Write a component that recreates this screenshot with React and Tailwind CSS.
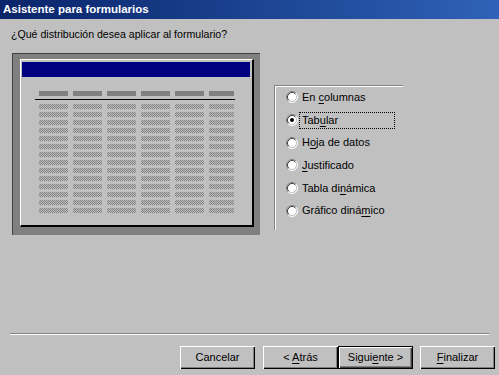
import React from "react";

const font = { fontFamily: '"Liberation Sans", Arial, sans-serif' };

function Radio({ checked }) {
  return (
    <svg width="12" height="12" viewBox="0 0 12 12" className="shrink-0">
      <circle cx="6" cy="6" r="5" fill="#ffffff" />
      <path d="M2.11 9.89 A5.5 5.5 0 0 1 9.89 2.11" fill="none" stroke="#808080" strokeWidth="1" />
      <path d="M9.89 2.11 A5.5 5.5 0 0 1 2.11 9.89" fill="none" stroke="#ffffff" strokeWidth="1" />
      <path d="M2.82 9.18 A4.5 4.5 0 0 1 9.18 2.82" fill="none" stroke="#404040" strokeWidth="1" />
      <path d="M9.18 2.82 A4.5 4.5 0 0 1 2.82 9.18" fill="none" stroke="#c0c0c0" strokeWidth="1" />
      {checked && <circle cx="6" cy="6" r="2" fill="#000000" />}
    </svg>
  );
}

function clsxLike(...parts) {
  return parts.filter(Boolean).join(" ");
}

function Button({ children, isDefault, className = "" }) {
  return (
    <div
      className={clsxLike(
        "w-[75px] h-[23px] flex items-center justify-center text-[11px] text-black bg-[#c0c0c0] whitespace-pre",
        isDefault
          ? "border border-black shadow-[inset_1px_1px_#ffffff,inset_-1px_-1px_#404040,inset_-2px_-2px_#808080]"
          : "shadow-[inset_1px_1px_#ffffff,inset_-1px_-1px_#000000,inset_-2px_-2px_#808080]",
        className
      )}
    >
      <span>{children}</span>
    </div>
  );
}

const options = [
  { pre: "En ", key: "c", post: "olumnas" },
  { pre: "Tab", key: "u", post: "lar", checked: true },
  { pre: "H", key: "o", post: "ja de datos" },
  { pre: "", key: "J", post: "ustificado" },
  { pre: "Tabla di", key: "n", post: "ámica" },
  { pre: "Gráfico diná", key: "m", post: "ico" },
];

const cols = [0, 1, 2, 3, 4, 5];
const rows = Array.from({ length: 14 }, (_, i) => i);

export default function App() {
  return (
    <div className="w-[499px] h-[375px] bg-[#c0c0c0] flex flex-col overflow-hidden text-black" style={font}>
      <div className="h-[19px] shrink-0 flex items-center pl-[3px] bg-gradient-to-r from-[#0a246a] to-[#2f62b8]">
        <span className="text-white font-bold text-[11.5px] leading-none">Asistente para formularios</span>
      </div>

      <p className="mt-[9px] ml-[11px] text-[10.6px] leading-[13px]">¿Qué distribución desea aplicar al formulario?</p>

      <div className="flex items-start mt-[12px] ml-[12px]">
        {/* preview */}
        <div className="w-[248px] h-[182px] bg-[#808080] border-l border-t border-[#404040] border-r-white border-b-white pl-[7px] pt-[5px] pr-[5px] pb-[7px]">
          <div className="w-[234px] h-[168px] bg-[#c0c0c0] border-l border-t border-white border-r-2 border-b-2 border-r-black border-b-black">
            <div className="ml-[1px] mt-[2px] w-[228px] h-[15px] bg-[#000080]" />
            <div className="ml-[18px] mt-[14px] flex gap-[5px]">
              {cols.map((c) => (
                <div key={c} className={(c === 5 ? "w-[25px]" : "w-[29px]") + " h-[5px] bg-[#808080]"} />
              ))}
            </div>
            <div className="ml-[14px] mt-[3px] w-[200px] h-[1px] bg-black" />
            <div className="ml-[18px] mt-[4px] flex flex-col gap-[3px]">
              {rows.map((r) => (
                <div key={r} className="flex gap-[5px]">
                  {cols.map((c) => (
                    <div
                      key={c}
                      className={
                        (c === 5 ? "w-[25px]" : "w-[29px]") +
                        " h-[5px] bg-[repeating-conic-gradient(#808080_0_25%,#c0c0c0_0_50%)] [background-size:2px_2px]"
                      }
                    />
                  ))}
                </div>
              ))}
            </div>
          </div>
        </div>

        {/* option group */}
        <div className="ml-[14px] mt-[32px] w-[129px] h-[145px] border-l border-t border-[#808080] border-r-white border-b-white">
          <div className="w-full h-full border-l border-t border-white border-r-[#808080] border-b-[#808080] pl-[10px]">
            <div className="-mt-[1px]">
              {options.map((o, i) => (
                <div key={i} className="h-[22.7px] flex items-center">
                  <Radio checked={o.checked} />
                  <span
                    className={
                      "block ml-[1px] h-[17px] w-[96px] px-[2px] leading-[15px] whitespace-pre text-[11px] border border-dotted " +
                      (o.checked ? "border-black" : "border-transparent")
                    }
                  >
                    {o.pre}
                    <span className="underline underline-offset-2">{o.key}</span>
                    {o.post}
                  </span>
                </div>
              ))}
            </div>
          </div>
        </div>
      </div>

      <div className="mt-auto">
        <div className="mx-[10px] h-[1px] bg-[#808080]" />
        <div className="mx-[10px] h-[1px] bg-white" />
        <div className="mt-[11px] mb-[6px] flex justify-end pr-[4px]">
          <Button className="mr-[8px]">Cancelar</Button>
          <Button>
            {"< "}
            <span className="underline underline-offset-2">A</span>trás
          </Button>
          <Button isDefault>
            Sigui<span className="underline underline-offset-2">e</span>
            {"nte >"}
          </Button>
          <Button className="ml-[7px]">
            <span className="underline underline-offset-2">F</span>inalizar
          </Button>
        </div>
      </div>
    </div>
  );
}
